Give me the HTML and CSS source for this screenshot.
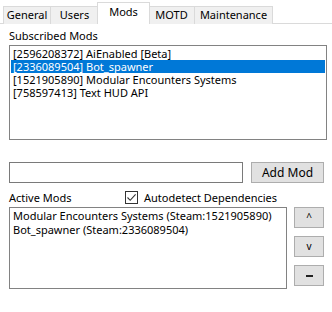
FILE: index.html
```html
<!DOCTYPE html>
<html>
<head>
<meta charset="utf-8">
<link rel="stylesheet" href="styles.css">
</head>
<body>
<div class="tabs">
  <div class="tab t-general">General</div>
  <div class="tab t-users">Users</div>
  <div class="tab active t-mods">Mods</div>
  <div class="tab t-motd">MOTD</div>
  <div class="tab t-maint">Maintenance</div>
</div>
<div class="page">
  <div class="label sub-label">Subscribed Mods</div>
  <div class="listbox subscribed">
    <div class="item">[2596208372] AiEnabled [Beta]</div>
    <div class="item selected">[2336089504] Bot_spawner</div>
    <div class="item">[1521905890] Modular Encounters Systems</div>
    <div class="item">[758597413] Text HUD API</div>
  </div>
  <div class="add-row">
    <div class="textbox"></div>
    <div class="button add-btn">Add Mod</div>
  </div>
  <div class="active-head">
    <div class="label active-label">Active Mods</div>
    <div class="check">
      <span class="box"><svg width="11" height="11" viewBox="0 0 11 11"><path d="M1.5 5.5 L4.2 8.3 L9.6 2.4" fill="none" stroke="#333" stroke-width="1.1"/></svg></span>
      <span class="check-text">Autodetect Dependencies</span>
    </div>
  </div>
  <div class="active-row">
    <div class="listbox active-list">
      <div class="item">Modular Encounters Systems (Steam:1521905890)</div>
      <div class="item">Bot_spawner (Steam:2336089504)</div>
    </div>
    <div class="side-buttons">
      <div class="button small">^</div>
      <div class="button small">v</div>
      <div class="button small minus"><span class="dash"></span></div>
    </div>
  </div>
</div>
</body>
</html>
```
FILE: styles.css
```css
html, body {
  margin: 0;
  padding: 0;
  background: #ffffff;
}
body {
  width: 332px;
  height: 312px;
  overflow: hidden;
  font-family: "Noto Sans", "Open Sans", sans-serif;
  font-size: 11px;
  color: #000;
}
.tabs {
  display: flex;
  align-items: flex-end;
  height: 23px;
  padding-left: 3px;
  border-bottom: 1px solid #dadada;
}
.tab {
  box-sizing: border-box;
  height: 18px;
  margin-bottom: -1px;
  background: #f0f0f0;
  border: 1px solid #dadada;
  border-bottom: none;
  line-height: 16px;
  text-align: center;
  margin-right: -1px;
}
.tab.active {
  background: #fff;
  line-height: 18px;
  position: relative;
  z-index: 1;
  margin-left: -1px;
  margin-right: -2px;
  height: 22px;
  padding-bottom: 1px;
}
.t-general { width: 48px; }
.t-users { width: 49px; }
.t-mods { width: 53px; }
.t-motd { width: 47px; }
.t-maint { width: 79px; }
.page {
  padding: 4px 6px 0 9px;
}
.label {
  line-height: 15px;
}
.sub-label {
  height: 17px;
}
.listbox {
  box-sizing: border-box;
  border: 1px solid #828282;
  background: #fff;
  padding: 1px;
}
.subscribed {
  width: 318px;
  height: 95px;
}
.item {
  height: 13px;
  line-height: 13px;
  padding-left: 2px;
  white-space: nowrap;
}
.item.selected {
  background: #0078d7;
  color: #fff;
}
.add-row {
  display: flex;
  margin-top: 22px;
  gap: 8px;
}
.textbox {
  box-sizing: border-box;
  width: 234px;
  height: 21px;
  border: 1px solid #7a7a7a;
}
.button {
  box-sizing: border-box;
  background: #e1e1e1;
  border: 1px solid #adadad;
  text-align: center;
}
.add-btn {
  width: 73px;
  height: 21px;
  line-height: 19px;
  font-size: 12px;
}
.active-head {
  display: flex;
  align-items: center;
  margin-top: 7px;
  height: 15px;
}
.active-label {
  width: 116px;
}
.check {
  display: flex;
  align-items: center;
}
.box {
  box-sizing: border-box;
  width: 13px;
  height: 13px;
  border: 1px solid #333;
  display: flex;
  align-items: center;
  justify-content: center;
  background: #fff;
  margin-right: 6px;
}
.box svg { display: block; }
.active-row {
  display: flex;
  margin-top: 2px;
  gap: 7px;
}
.active-list {
  width: 278px;
  height: 82px;
  padding-top: 1px;
}
.active-list .item {
  height: 14px;
  line-height: 14px;
}
.side-buttons {
  display: flex;
  flex-direction: column;
  gap: 8px;
}
.button.small {
  width: 30px;
  height: 21px;
  line-height: 19px;
  font-size: 10px;
}
.minus {
  display: flex;
  align-items: center;
  justify-content: center;
}
.dash {
  display: block;
  width: 7px;
  height: 2px;
  background: #222;
}
```
